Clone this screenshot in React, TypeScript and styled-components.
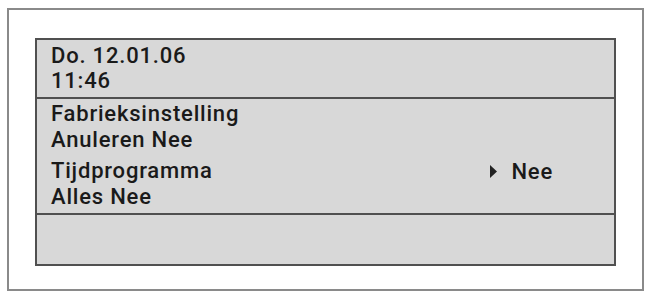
import React from 'react';
import styled, { createGlobalStyle } from 'styled-components';

const GlobalStyle = createGlobalStyle`
  html, body {
    margin: 0;
    padding: 0;
    background: #ffffff;
  }
  body {
    font-family: Roboto, 'Liberation Sans', sans-serif;
  }
`;

const Frame = styled.div`
  box-sizing: border-box;
  width: 637px;
  height: 283px;
  margin: 8px 0 0 7px;
  padding: 28px 0 0 26px;
  border: 2px solid #8a8a8a;
  background: #ffffff;
`;

const Display = styled.div`
  box-sizing: border-box;
  display: flex;
  flex-direction: column;
  width: 581px;
  height: 228px;
  border: 2px solid #505050;
  background: #d8d8d8;
  color: #1a1a1a;
  font-size: 22px;
  font-weight: 500;
  letter-spacing: 0.8px;
`;

const Header = styled.div`
  box-sizing: border-box;
  height: 59px;
  padding: 3px 0 0 14px;
  border-bottom: 2px solid #505050;
`;

const Body = styled.div`
  box-sizing: border-box;
  height: 116px;
  padding: 2px 0 0 14px;
  border-bottom: 2px solid #505050;
`;

const Footer = styled.div`
  flex: 1;
`;

const Line = styled.div<{ $gap?: number; $height?: number }>`
  display: flex;
  align-items: baseline;
  height: ${(p) => p.$height ?? 26}px;
  line-height: ${(p) => p.$height ?? 26}px;
  margin-top: ${(p) => p.$gap ?? 0}px;
  white-space: nowrap;
`;

const Label = styled.span`
  flex: 1;
`;

const Value = styled.span`
  display: flex;
  align-items: center;
  gap: 14px;
  margin-right: 61px;
`;

const Pointer = styled.svg`
  width: 7px;
  height: 13px;
  flex-shrink: 0;
`;

function Arrow() {
  return (
    <Pointer viewBox="0 0 7 13">
      <path d="M0 0 L7 6.5 L0 13 Z" fill="#222222" />
    </Pointer>
  );
}

export default function App() {
  return (
    <>
      <GlobalStyle />
      <Frame>
        <Display>
          <Header>
            <Line $height={25}>Do. 12.01.06</Line>
            <Line $height={25}>11:46</Line>
          </Header>
          <Body>
            <Line>Fabrieksinstelling</Line>
            <Line>Anuleren Nee</Line>
            <Line $gap={5}>
              <Label>Tijdprogramma</Label>
              <Value>
                <Arrow />
                Nee
              </Value>
            </Line>
            <Line>Alles Nee</Line>
          </Body>
          <Footer />
        </Display>
      </Frame>
    </>
  );
}
